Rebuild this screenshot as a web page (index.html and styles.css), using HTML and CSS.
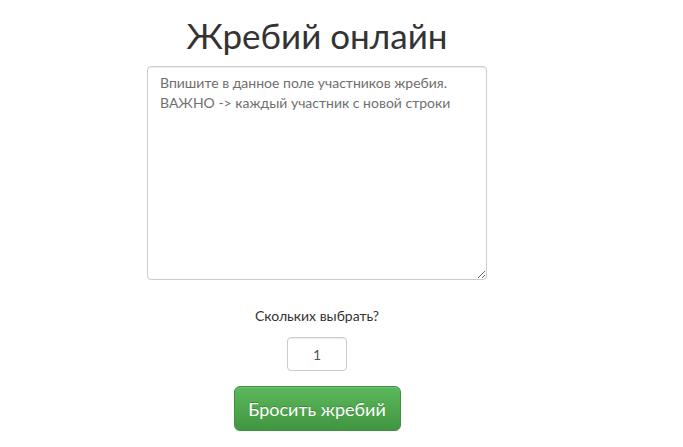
FILE: index.html
```html
<!DOCTYPE html>
<html lang="ru">
<head>
  <meta charset="UTF-8" />
  <title>Жребий онлайн</title>
  <link rel="stylesheet" href="styles.css">
</head>
<body>
<div class="page">
  <h1>Жребий онлайн</h1>
  <textarea class="names" placeholder="Впишите в данное поле участников жребия.&#10;ВАЖНО -> каждый участник с новой строки"></textarea>
  <label class="count-label" for="count">Скольких выбрать?</label>
  <input class="count" id="count" type="text" value="1">
  <button class="btn-draw" type="button">Бросить жребий</button>
</div>
</body>
</html>
```

FILE: styles.css
```css
html, body {
  margin: 0;
  padding: 0;
  background: #fff;
  color: #333;
  font-family: Lato, "Open Sans", sans-serif;
}

.page {
  width: 634px;
  display: flex;
  flex-direction: column;
  align-items: center;
}

h1 {
  margin: 14px 0 10px;
  font-size: 35px;
  font-weight: 400;
  line-height: 42px;
  color: #333;
}

.names {
  box-sizing: border-box;
  width: 340px;
  height: 214px;
  padding: 6px 12px;
  font-family: inherit;
  font-size: 14px;
  line-height: 20px;
  color: #555;
  border: 1px solid #ccc;
  border-radius: 4px;
  box-shadow: inset 0 1px 1px rgba(0, 0, 0, 0.075);
  resize: vertical;
}

.names::placeholder {
  color: #6f6f6f;
}

.count-label {
  margin-top: 27px;
  font-size: 14px;
  color: #333;
}

.count {
  box-sizing: border-box;
  margin-top: 13px;
  width: 60px;
  height: 34px;
  padding: 6px 12px;
  font-family: inherit;
  font-size: 14px;
  color: #555;
  text-align: center;
  border: 1px solid #ccc;
  border-radius: 4px;
  box-shadow: inset 0 1px 1px rgba(0, 0, 0, 0.075);
}

.btn-draw {
  margin-top: 15px;
  width: 167px;
  height: 45px;
  font-family: inherit;
  font-size: 18px;
  color: #fff;
  background: linear-gradient(to bottom, #5cb85c 0%, #419641 100%);
  border: 1px solid #3e8f3e;
  border-radius: 6px;
  text-shadow: 0 -1px 0 rgba(0, 0, 0, 0.2);
  box-shadow: inset 0 1px 0 rgba(255, 255, 255, 0.15), 0 1px 1px rgba(0, 0, 0, 0.075);
  cursor: pointer;
}
```
